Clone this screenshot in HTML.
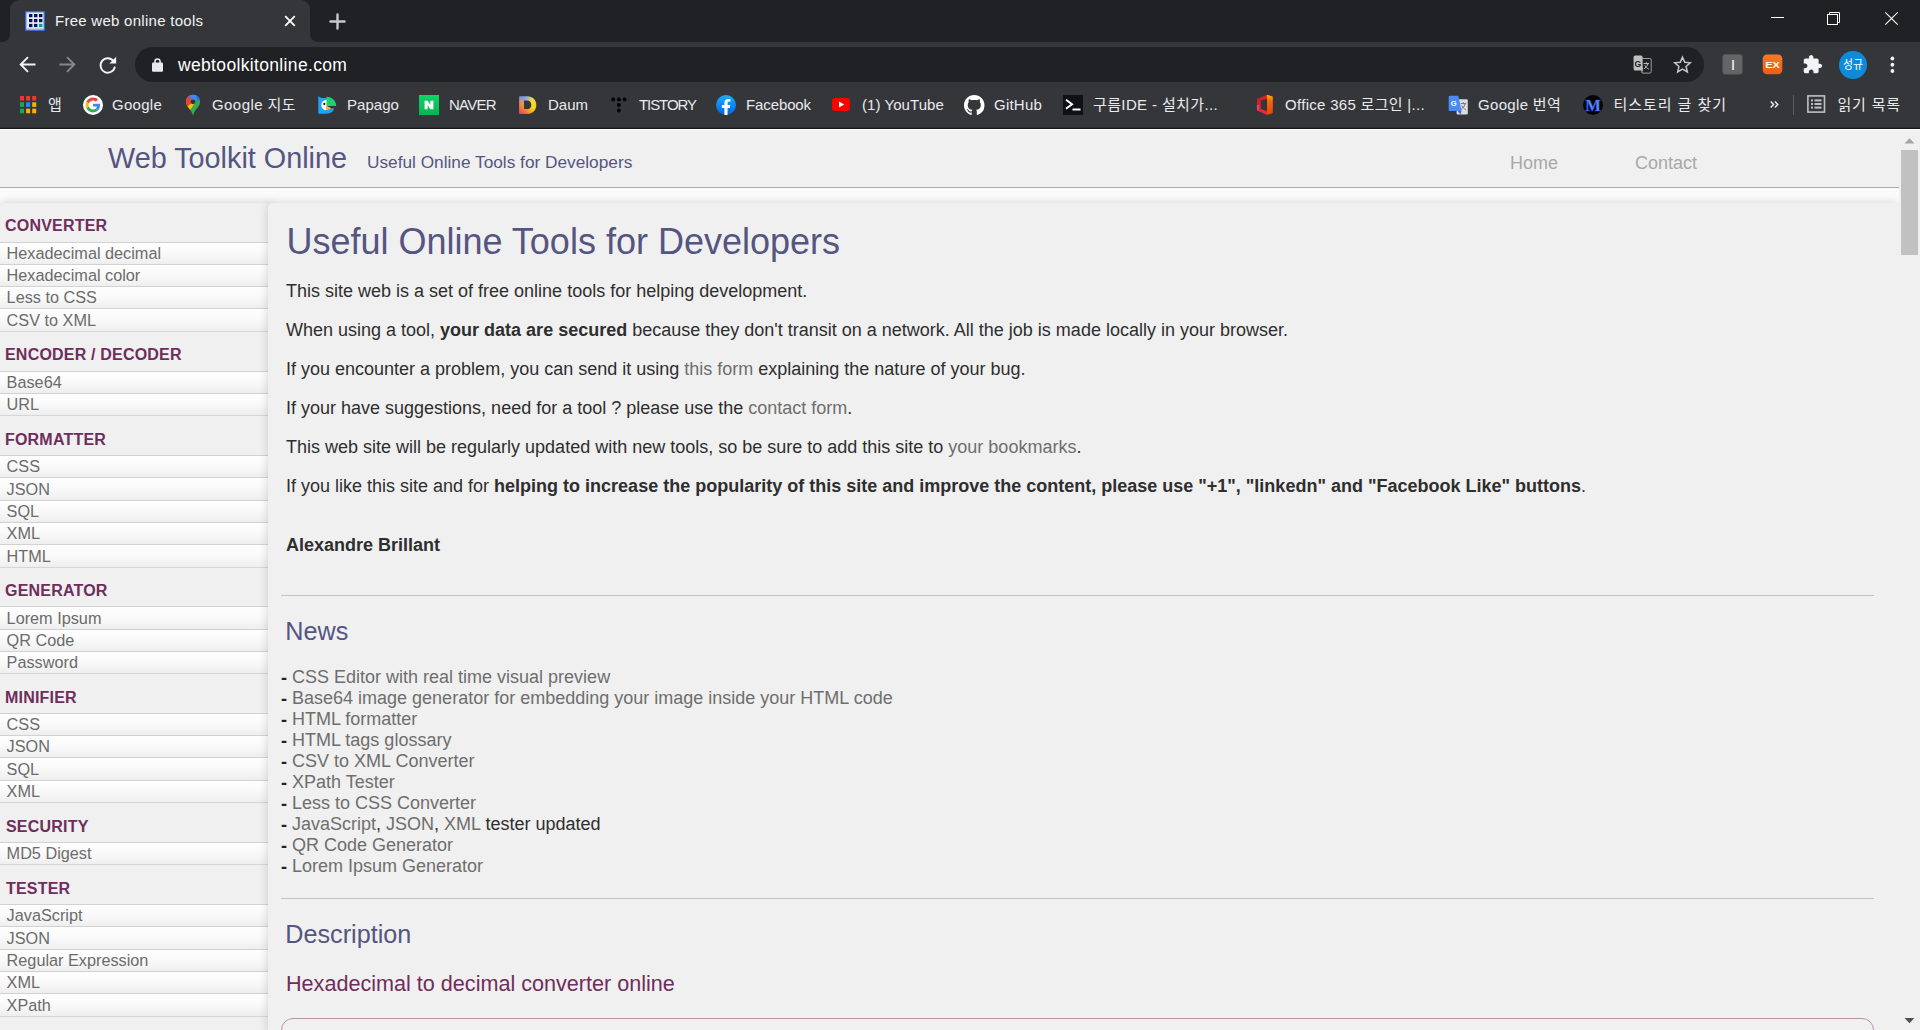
<!DOCTYPE html>
<html lang="en">
<head>
<meta charset="utf-8">
<title>Free web online tools</title>
<style>
*{box-sizing:border-box}
html,body{margin:0;padding:0;width:1920px;height:1030px;overflow:hidden;background:#f0f0f0}
body{position:relative;font-family:"Liberation Sans","Noto Sans CJK KR",sans-serif}
/* ---------- browser chrome ---------- */
#chrome{position:absolute;left:0;top:0;width:1920px;height:130px;background:#35363a;color:#e8eaed;overflow:hidden;z-index:10}
#tabstrip{position:absolute;left:0;top:0;width:1920px;height:42px;background:#202124}
#tab{position:absolute;left:10px;top:0;width:300px;height:42px;background:#35363a;border-radius:9px 9px 0 0}
#tab:before,#tab:after{content:"";position:absolute;bottom:0;width:8px;height:8px}
#tab:before{left:-8px;background:radial-gradient(circle at 0 0,#202124 7.5px,#35363a 8.5px)}
#tab:after{right:-8px;background:radial-gradient(circle at 100% 0,#202124 7.5px,#35363a 8.5px)}
.ct{position:absolute;white-space:nowrap;color:#e8eaed;line-height:20px}
#tabtitle{left:55px;top:11px;font-size:15px;letter-spacing:.27px;color:#f1f3f4}
#omni{position:absolute;left:135px;top:47px;width:1569px;height:35px;border-radius:17.5px;background:#202124}
#url{left:178px;top:54px;font-size:17.5px;letter-spacing:.34px;color:#fff;line-height:22px}
.bm{font-size:15px;top:94px;line-height:22px;color:#e8eaed}
#chromeline{position:absolute;left:0;top:127px;width:1920px;height:2px;background:linear-gradient(#2b2c2f 0,#2b2c2f 50%,#161618 50%,#161618 100%)}
svg{position:absolute;overflow:visible}
/* ---------- page ---------- */
#page{position:absolute;left:0;top:130px;width:1899px;height:900px;background:#fbfbfb;overflow:hidden;color:#222;font-size:18px}

#chromeline2{position:absolute;left:0;top:129px;width:1920px;height:1px;background:#fff}
#hdr{position:absolute;left:0;top:0;width:1899px;height:58px;background:#f0f0f0;border-bottom:1px solid #aaa}
#hdr .t{position:absolute;white-space:nowrap;color:#555582}
#logo{left:108px;top:12px;font-size:28.8px;line-height:33px}
#sub{left:367px;top:22px;font-size:17.25px;line-height:20px}
#hdr .n{position:absolute;white-space:nowrap;color:#a8a8a8;font-size:18px;line-height:21px;top:23px}
#side{position:absolute;left:0;top:73px;width:272px;height:830px;background:#f0f0f0;border-radius:5px 0 0 0;box-shadow:0 0 10px rgba(0,0,0,.19)}
#side h4{position:absolute;left:5px;margin:0;letter-spacing:.2px;font-size:16px;line-height:19px;font-weight:700;color:#6f2d5c;white-space:nowrap}
#side ul{position:absolute;left:0;width:268px;list-style:none;margin:0;padding:0;border-bottom:1px solid #d6d6d6}
#side li{width:268px;border-top:1px solid #d2d2d2;padding:0 0 0 6.6px;font-size:16.25px;line-height:21px;color:#6b6b6b;white-space:nowrap;background:linear-gradient(#fefefe 0,#fbfbfb 35%,#f5f5f5 70%,#eee 100%)}
#main{position:absolute;left:268px;top:73px;width:1631px;height:830px;background:#f0f0f0;border-radius:5px 5px 0 0;box-shadow:0 0 10px rgba(0,0,0,.17)}
#main h1{position:absolute;margin:0;left:18.4px;top:18px;font-size:36px;line-height:42px;font-weight:400;color:#555582;white-space:nowrap}
#main p{position:absolute;margin:0;left:18px;font-size:18px;line-height:21px;white-space:nowrap;color:#2e2e2e}
#main a{color:#6e6e6e;text-decoration:none}
#main hr{position:absolute;margin:0;border:0;left:13px;width:1593px;height:1px;background:#c4c4c4}
#main h2{position:absolute;margin:0;left:17.3px;font-size:25.2px;line-height:29px;font-weight:400;color:#555582;white-space:nowrap}
#main h3{position:absolute;margin:0;left:18px;font-size:21.6px;line-height:25px;font-weight:400;color:#6f2d5c;white-space:nowrap}
#news{position:absolute;left:13px;top:464px;font-size:18px;line-height:21px;color:#2e2e2e;white-space:nowrap}
#news div{height:21px}
#news i{font-style:normal;font-weight:700;position:relative;top:1px;color:#222}
#box{position:absolute;left:13px;top:815px;width:1593px;height:40px;border:1px solid #b793ab;border-radius:12px}
#sb{position:absolute;left:1899px;top:130px;width:21px;height:900px;background:#f0f0f0}
#sb i{position:absolute;left:2px;top:20px;width:17px;height:105px;background:#c1c1c1}
</style>
</head>
<body>
<div id="chrome">
  <div id="tabstrip"></div>
  <div id="tab"></div>
  <div id="tabtitle" class="ct">Free web online tools</div>
  <div id="omni"></div>
  <div id="url" class="ct">webtoolkitonline.com</div>
  <div class="ct bm" style="left:48px;letter-spacing:0.19px">앱</div>
  <div class="ct bm" style="left:112px;letter-spacing:0.27px">Google</div>
  <div class="ct bm" style="left:212px;letter-spacing:0.43px">Google 지도</div>
  <div class="ct bm" style="left:347px;letter-spacing:0.05px">Papago</div>
  <div class="ct bm" style="left:449px;letter-spacing:-0.72px">NAVER</div>
  <div class="ct bm" style="left:548px;letter-spacing:-0.00px">Daum</div>
  <div class="ct bm" style="left:639px;letter-spacing:-1.07px">TISTORY</div>
  <div class="ct bm" style="left:746px;letter-spacing:-0.11px">Facebook</div>
  <div class="ct bm" style="left:862px;letter-spacing:0.07px">(1) YouTube</div>
  <div class="ct bm" style="left:994px;letter-spacing:0.22px">GitHub</div>
  <div class="ct bm" style="left:1093px;letter-spacing:0.37px">구름IDE - 설치가...</div>
  <div class="ct bm" style="left:1285px;letter-spacing:0.30px">Office 365 로그인 |...</div>
  <div class="ct bm" style="left:1478px;letter-spacing:0.32px">Google 번역</div>
  <div class="ct bm" style="left:1613.5px;letter-spacing:0.95px">티스토리 글 찾기</div>
  <div class="ct bm" style="left:1837.5px;letter-spacing:0.82px">읽기 목록</div>
  <!-- favicon -->
  <svg style="left:25px;top:11px" width="20" height="20" viewBox="0 0 20 20"><rect x="0" y="0" width="20" height="20" fill="#3c68cd"/><rect x="1.4" y="1.4" width="17.2" height="17" fill="#e9e9f1"/><rect x="1.6" y="17.4" width="17" height="1.1" fill="#c4beb8"/>
  <g fill="#02105c"><rect x="4" y="3" width="3.4" height="3.2"/><rect x="9" y="3" width="3.4" height="3.2"/><rect x="14" y="3" width="3.4" height="3.2"/><rect x="4" y="8" width="3.4" height="3.2"/><rect x="9" y="8" width="3.4" height="3.2"/><rect x="14" y="8" width="3.4" height="3.2"/><rect x="4" y="12.9" width="3.4" height="3.2"/><rect x="9" y="12.9" width="3.4" height="3.2"/></g><rect x="14" y="12.9" width="3.4" height="3.2" fill="#089c8f"/></svg>
  <!-- tab close -->
  <svg style="left:284px;top:15px" width="12" height="12" viewBox="0 0 12 12"><path d="M1.2 1.2 L10.8 10.8 M10.8 1.2 L1.2 10.8" stroke="#fff" stroke-width="1.8" fill="none"/></svg>
  <!-- new tab -->
  <svg style="left:329px;top:13px" width="17" height="17" viewBox="0 0 17 17"><path d="M8.5 1.5 V15.5 M1.5 8.5 H15.5" stroke="#c6c9ce" stroke-width="2.4" stroke-linecap="round" fill="none"/></svg>
  <!-- window controls -->
  <svg style="left:1771px;top:17px" width="13" height="1" viewBox="0 0 13 1"><rect width="13" height="1" fill="#fff"/></svg>
  <svg style="left:1827px;top:12px" width="14" height="14" viewBox="0 0 14 14"><path d="M2.5 2.5 V0.5 H12.5 V10.5 H10.5" stroke="#fff" stroke-width="1" fill="none"/><rect x="0.5" y="2.5" width="10" height="10" stroke="#fff" stroke-width="1" fill="none"/></svg>
  <svg style="left:1885px;top:12px" width="13" height="13" viewBox="0 0 13 13"><path d="M0.3 0.3 L12.7 12.7 M12.7 0.3 L0.3 12.7" stroke="#fff" stroke-width="1.1" fill="none"/></svg>
  <!-- back -->
  <svg style="left:19px;top:56px" width="17" height="17" viewBox="0 0 17 17"><path d="M16.5 8.5 H2 M9 1.2 L1.7 8.5 L9 15.8" stroke="#f1f3f4" stroke-width="1.9" fill="none"/></svg>
  <!-- forward -->
  <svg style="left:59px;top:56px" width="17" height="17" viewBox="0 0 17 17"><path d="M0.5 8.5 H15 M8 1.2 L15.3 8.5 L8 15.8" stroke="#85878b" stroke-width="1.9" fill="none"/></svg>
  <!-- reload -->
  <svg style="left:99px;top:56px" width="18" height="18" viewBox="0 0 18 18"><path d="M14.6 5.2 A7.2 7.2 0 1 0 15.9 10.6" stroke="#f1f3f4" stroke-width="1.9" fill="none"/><path d="M17.2 0.8 V7.6 H10.4 Z" fill="#f1f3f4"/></svg>
  <!-- lock -->
  <svg style="left:152px;top:58px" width="11" height="14" viewBox="0 0 11 14"><rect x="0" y="4.6" width="11" height="9.2" rx="1.2" fill="#e8eaed"/><path d="M2.9 5 V3.6 A2.6 2.6 0 0 1 8.1 3.6 V5" stroke="#e8eaed" stroke-width="1.5" fill="none"/></svg>
  <!-- translate (omnibox) -->
  <svg style="left:1633px;top:55px" width="19" height="19" viewBox="0 0 19 19"><rect x="8.5" y="3.5" width="9.7" height="14.6" rx="1.3" fill="none" stroke="#9a9c9f" stroke-width="1"/><rect x="0.6" y="0.6" width="9" height="15" rx="1.6" fill="#bfc0c2"/><path d="M6.9 10.5 L10 18 L9.2 10 Z" fill="#bfc0c2"/><text x="1.6" y="11.6" font-family="Liberation Sans,sans-serif" font-weight="700" font-size="8.6" fill="#202124">G</text><path d="M10.6 8.6 H16 M13.3 7.3 V8.6 M15 8.6 C14.3 11 12.6 12.8 10.8 13.9 M11.8 10.4 C12.6 12 14.2 13.4 15.8 14.2" stroke="#c4c5c7" stroke-width="1" fill="none"/></svg>
  <!-- star -->
  <svg style="left:1673px;top:55px" width="19" height="19" viewBox="0 0 19 19"><path d="M9.5 2.2 L11.75 7.3 L17.3 7.85 L13.1 11.55 L14.35 17 L9.5 14.1 L4.65 17 L5.9 11.55 L1.7 7.85 L7.25 7.3 Z" fill="none" stroke="#c4c6c9" stroke-width="1.5" stroke-linejoin="miter"/></svg>
  <!-- ext I -->
  <svg style="left:1722px;top:54px" width="21" height="21" viewBox="0 0 21 21"><rect x="0.7" y="0.6" width="19.6" height="19.6" rx="2.4" fill="#646567" stroke="#57585b" stroke-width=".6"/><text x="10.95" y="15.5" text-anchor="middle" font-family="Liberation Sans,sans-serif" font-size="14.6" fill="#fff">I</text></svg>
  <!-- ext EX -->
  <svg style="left:1762px;top:54px" width="21" height="21" viewBox="0 0 21 21"><defs><linearGradient id="gex" x1="0" y1="0" x2="0" y2="1"><stop offset="0" stop-color="#f57a24"/><stop offset="1" stop-color="#e95f14"/></linearGradient></defs><rect x="0.7" y="0.6" width="19.6" height="19.6" rx="4.2" fill="url(#gex)"/><text x="10.5" y="13.7" text-anchor="middle" font-family="Liberation Sans,sans-serif" font-weight="700" font-size="8.4" textLength="14.6" lengthAdjust="spacingAndGlyphs" fill="#fff">EX</text></svg>
  <!-- puzzle -->
  <svg style="left:1802px;top:54px" width="21" height="21" viewBox="0 0 24 24"><path fill="#f1f3f4" d="M20.5 11H19V7c0-1.1-.9-2-2-2h-4V3.5C13 2.120 11.880 1 10.5 1S8 2.120 8 3.5V5H4c-1.1 0-1.990.9-1.990 2v3.800H3.500c1.490 0 2.700 1.210 2.700 2.700s-1.210 2.700-2.700 2.700H2V20c0 1.100.9 2 2 2h3.800v-1.500c0-1.490 1.210-2.700 2.700-2.700 1.490 0 2.700 1.210 2.700 2.700V22H17c1.100 0 2-.9 2-2v-4h1.500c1.380 0 2.500-1.120 2.500-2.500S21.880 11 20.500 11z"/></svg>
  <!-- avatar -->
  <svg style="left:1839px;top:51px" width="28" height="28" viewBox="0 0 28 28"><circle cx="14" cy="14" r="14" fill="#0d8bdb"/><text x="14" y="18.4" text-anchor="middle" font-family="Noto Sans CJK KR,NanumGothic,sans-serif" font-size="12" fill="#fff" textLength="20" lengthAdjust="spacingAndGlyphs">성규</text></svg>
  <!-- kebab -->
  <svg style="left:1890px;top:56px" width="5" height="18" viewBox="0 0 5 18"><circle cx="2.4" cy="2.5" r="1.9" fill="#f1f3f4"/><circle cx="2.4" cy="8.75" r="1.9" fill="#f1f3f4"/><circle cx="2.4" cy="15" r="1.9" fill="#f1f3f4"/></svg>
  <!-- apps -->
  <svg style="left:20px;top:96px" width="17" height="18" viewBox="0 0 17 18"><g><rect x="0" y="0" width="4" height="4.6" fill="#f0362c"/><rect x="6.1" y="0" width="4" height="4.6" fill="#f0362c"/><rect x="12.2" y="0" width="4" height="4.6" fill="#f0362c"/><rect x="0" y="6.3" width="4" height="4.6" fill="#21a452"/><rect x="6.1" y="6.3" width="4" height="4.6" fill="#1e8efa"/><rect x="12.2" y="6.3" width="4" height="4.6" fill="#fcb200"/><rect x="0" y="12.7" width="4" height="4.6" fill="#21a452"/><rect x="6.1" y="12.7" width="4" height="4.6" fill="#fcb200"/><rect x="12.2" y="12.7" width="4" height="4.6" fill="#fcb200"/></g></svg>
  <!-- google G -->
  <svg style="left:83px;top:95px" width="20" height="20" viewBox="0 0 20 20"><circle cx="10" cy="10" r="10" fill="#fff"/><g transform="translate(2.6 2.6) scale(0.308)"><path fill="#EA4335" d="M24 9.5c3.540 0 6.710 1.220 9.210 3.600l6.850-6.850C35.900 2.380 30.470 0 24 0 14.620 0 6.510 5.380 2.560 13.220l7.980 6.190C12.430 13.720 17.740 9.500 24 9.500z"/><path fill="#4285F4" d="M46.980 24.550c0-1.570-.15-3.090-.38-4.550H24v9.020h12.940c-.58 2.960-2.260 5.480-4.780 7.180l7.730 6c4.510-4.180 7.090-10.360 7.090-17.650z"/><path fill="#FBBC05" d="M10.530 28.590c-.48-1.450-.76-2.990-.76-4.590s.27-3.140.76-4.590l-7.980-6.190C.92 16.460 0 20.120 0 24c0 3.880.92 7.540 2.560 10.780l7.970-6.190z"/><path fill="#34A853" d="M24 48c6.480 0 11.930-2.130 15.890-5.810l-7.730-6c-2.150 1.450-4.920 2.300-8.160 2.300-6.260 0-11.570-4.220-13.470-9.910l-7.980 6.190C6.510 42.620 14.620 48 24 48z"/></g></svg>
  <!-- maps pin -->
  <svg style="left:185px;top:94px" width="16" height="21" viewBox="0 0 16 21"><defs><clipPath id="pin"><path d="M8 0.8C4.1 0.8 0.9 3.9 0.9 7.8C0.9 10.3 2.2 12.1 3.7 13.9C5.4 15.9 6.9 17.6 7.3 20C7.4 20.4 7.6 20.7 8 20.7C8.4 20.7 8.6 20.4 8.7 20C9.1 17.6 10.6 15.9 12.3 13.9C13.8 12.1 15.1 10.3 15.1 7.8C15.1 3.9 11.9 0.8 8 0.8Z"/></clipPath></defs><g clip-path="url(#pin)"><rect x="0" y="0" width="16" height="21" fill="#34a853"/><path d="M0 0 H16 V4 L8 8 L0 8 Z" fill="#4285f4"/><path d="M0 2 L5 3 L8 8 L2 13 L0 12 Z" fill="#ea4335"/><path d="M2.3 12.5 L8 8 L9.5 9.5 L5 16.5 Z" fill="#fbbc04"/><path d="M11 1 L16 3 V8 L12 5 Z" fill="#1a73e8"/></g><circle cx="8" cy="7.8" r="2.4" fill="#35363a"/></svg>
  <!-- papago -->
  <svg style="left:318px;top:96px" width="20" height="18" viewBox="0 0 20 18"><path d="M0.3 0.2 L3.6 2.1 H8.6 V17.8 H0.3 Z" fill="#1ea3f6"/><path d="M8.4 17.8 C12.6 17.8 15.6 15.6 16 12.6 L13 12.2 L8.4 14.3 Z" fill="#1ea3f6"/><path d="M8.4 0.7 C14 0.7 18.2 4.8 18.2 10 L8.4 10 Z" fill="#1fd26c"/><path d="M8.5 3.8 A5.2 5.2 0 0 0 8.5 14.2 Z" fill="#fff"/><path d="M8.4 9.7 L13.4 12.3 L8.4 14.5 Z" fill="#fbc02d"/><circle cx="6.3" cy="8" r="1.15" fill="#222"/></svg>
  <!-- naver -->
  <svg style="left:419px;top:95px" width="20" height="20" viewBox="0 0 20 20"><defs><linearGradient id="gnv" x1="0" y1="0" x2="0" y2="1"><stop offset="0" stop-color="#0fd466"/><stop offset="1" stop-color="#04b551"/></linearGradient></defs><rect width="20" height="20" fill="url(#gnv)"/><path d="M5.6 5.8 H8.7 L11.4 10 V5.8 H14.4 V14.2 H11.4 L8.6 10 V14.2 H5.6 Z" fill="#fff"/></svg>
  <!-- daum -->
  <svg style="left:519px;top:96px" width="18" height="18" viewBox="0 0 18 18"><defs><linearGradient id="gdm" x1="0" y1="0" x2="1" y2=".35"><stop offset="0" stop-color="#6788f3"/><stop offset=".4" stop-color="#9aa6d8"/><stop offset=".72" stop-color="#f2dc3c"/><stop offset="1" stop-color="#f9d51c"/></linearGradient><linearGradient id="gdm2" x1=".9" y1=".1" x2=".1" y2=".95"><stop offset="0" stop-color="#f7a01e" stop-opacity="0"/><stop offset=".42" stop-color="#f7a01e" stop-opacity="0"/><stop offset=".68" stop-color="#f79324" stop-opacity=".95"/><stop offset="1" stop-color="#f3455f"/></linearGradient><clipPath id="cdm"><path fill-rule="evenodd" clip-rule="evenodd" d="M0.3 0.2 H8.3 C13.8 0.2 17.3 3.8 17.3 8.9 C17.3 14 13.8 17.6 8.3 17.6 H0.3 Z M5 4.6 V13.2 H8 C10.7 13.2 12.3 11.5 12.3 8.9 C12.3 6.3 10.7 4.6 8 4.6 Z"/></clipPath></defs><g clip-path="url(#cdm)"><rect width="18" height="18" fill="url(#gdm)"/><rect width="18" height="18" fill="url(#gdm2)"/></g></svg>
  <!-- tistory -->
  <svg style="left:610px;top:96px" width="18" height="18" viewBox="0 0 18 18"><g fill="#000"><circle cx="3.2" cy="3.4" r="1.9"/><circle cx="8.9" cy="3.4" r="1.9"/><circle cx="14.6" cy="3.4" r="1.9"/><circle cx="8.9" cy="9" r="1.9"/><circle cx="8.9" cy="14.5" r="1.9"/></g></svg>
  <!-- facebook -->
  <svg style="left:716px;top:95px" width="20" height="20" viewBox="0 0 20 20"><defs><linearGradient id="gfb" x1="0" y1="0" x2="0" y2="1"><stop offset="0" stop-color="#19aeff"/><stop offset="1" stop-color="#0863e0"/></linearGradient></defs><circle cx="10" cy="10" r="10" fill="url(#gfb)"/><path d="M13.9 12.9 L14.35 10 H11.55 V8.1 C11.55 7.3 11.95 6.55 13.2 6.55 H14.45 V4.1 C14.45 4.1 13.3 3.9 12.2 3.9 C9.9 3.9 8.4 5.3 8.4 7.8 V10 H5.85 V12.9 H8.4 V19.9 C9.4 20.05 10.5 20.05 11.55 19.9 V12.9 Z" fill="#fff"/></svg>
  <!-- youtube -->
  <svg style="left:832px;top:98px" width="18" height="13" viewBox="0 0 18 13"><rect x="0" y="0" width="18" height="13" rx="3.2" fill="#ff0000"/><path d="M7 3.5 L12.2 6.5 L7 9.5 Z" fill="#fff"/></svg>
  <!-- github -->
  <svg style="left:963.6px;top:94.6px" width="20.5" height="20.5" viewBox="0 0 16 16"><path fill="#fff" d="M8 0C3.580 0 0 3.580 0 8c0 3.540 2.290 6.530 5.470 7.590.4.070.55-.17.550-.38 0-.19-.010-.82-.010-1.490-2.010.37-2.530-.49-2.690-.94-.09-.23-.48-.94-.82-1.130-.28-.15-.68-.52-.010-.53.630-.010 1.080.58 1.230.82.720 1.210 1.870.87 2.330.66.070-.52.280-.87.510-1.070-1.780-.2-3.640-.89-3.640-3.950 0-.87.310-1.590.82-2.150-.08-.2-.36-1.020.08-2.120 0 0 .67-.21 2.200.82.640-.18 1.320-.27 2-.27.680 0 1.360.09 2 .27 1.530-1.040 2.200-.82 2.200-.82.440 1.100.16 1.920.08 2.120.51.560.82 1.270.82 2.150 0 3.070-1.870 3.750-3.650 3.950.29.250.54.730.54 1.480 0 1.070-.010 1.930-.010 2.200 0 .21.150.46.550.38A8.013 8.013 0 0016 8c0-4.420-3.580-8-8-8z"/></svg>
  <!-- goorm terminal -->
  <svg style="left:1063px;top:95px" width="20" height="20" viewBox="0 0 20 20"><rect width="20" height="20" fill="#0e1116"/><path d="M3 4.8 L9 9.3 L3 13.8" stroke="#fff" stroke-width="2" fill="none"/><rect x="9.5" y="13.5" width="8" height="2" fill="#fff"/></svg>
  <!-- office -->
  <svg style="left:1256px;top:94px" width="18" height="22" viewBox="0 0 18 22"><defs><linearGradient id="gof1" x1="0" y1="0" x2="0" y2="1"><stop offset="0" stop-color="#ffb900"/><stop offset=".3" stop-color="#f76a0c"/><stop offset="1" stop-color="#e8400c"/></linearGradient><linearGradient id="gof2" x1="0" y1="0" x2="1" y2="1"><stop offset="0" stop-color="#c8161d"/><stop offset="1" stop-color="#ee3035"/></linearGradient></defs><path d="M11 0.8 L16.8 2.6 V19 L11 21 Z" fill="url(#gof1)"/><path d="M11 0.8 L1 5 V16.5 L4.8 14.8 V6.5 L11 4.8 Z" fill="url(#gof2)"/><path d="M1 16.5 L11 21 V17.3 L4.8 14.8 Z" fill="#e92a36"/><path d="M0.8 11 L1 16.5 L3 15.6 V11 Z" fill="#d959a8" opacity=".7"/></svg>
  <!-- google translate -->
  <svg style="left:1448px;top:95px" width="20" height="20" viewBox="0 0 20 20"><rect x="8.6" y="4.2" width="11.2" height="15.4" rx="1.3" fill="#dadce0"/><path d="M12.6 8.6 H18.2 M15.4 7.3 V8.6 M17.2 8.6 C16.5 11.3 14.9 13.3 12.9 14.5 M13.8 10.6 C14.6 12.4 16.2 13.8 17.8 14.6" stroke="#70757a" stroke-width="1" fill="none"/><path d="M2 0.7 H9.2 C9.9 0.7 10.4 1.1 10.6 1.8 L13.5 16.1 H2 C1.2 16.1 0.7 15.5 0.7 14.8 V2 C0.7 1.3 1.2 0.7 2 0.7 Z" fill="#4a8af4"/><path d="M9.8 16.1 L12.5 19.5 L13.5 16.1 Z" fill="#3367d6"/><text x="2.8" y="11" font-family="Liberation Sans,sans-serif" font-weight="700" font-size="7.6" fill="#fff">G</text></svg>
  <!-- M icon -->
  <svg style="left:1583px;top:95px" width="20" height="20" viewBox="0 0 20 20"><circle cx="10" cy="10" r="10" fill="#030308"/><text x="10" y="15.6" text-anchor="middle" font-family="Liberation Serif,serif" font-weight="700" font-size="16.5" fill="#5d8af2" stroke="#2a50d8" stroke-width=".5">M</text></svg>
  <!-- chevron >> -->
  <svg style="left:1770px;top:101px" width="9" height="7" viewBox="0 0 9 7"><path d="M0.7 0.4 L3.6 3.5 L0.7 6.6 M4.9 0.4 L7.8 3.5 L4.9 6.6" stroke="#e8eaed" stroke-width="1.5" fill="none"/></svg>
  <!-- separator -->
  <svg style="left:1793px;top:95px" width="1" height="20" viewBox="0 0 1 20"><rect width="1" height="20" fill="#5a5c60"/></svg>
  <!-- reading list -->
  <svg style="left:1807px;top:95px" width="19" height="18" viewBox="0 0 19 18"><rect x="0.9" y="0.9" width="16.6" height="16.2" fill="none" stroke="#bdc1c6" stroke-width="1.6"/><g fill="#bdc1c6"><rect x="4" y="4.4" width="2" height="2"/><rect x="4" y="8" width="2" height="2"/><rect x="4" y="11.6" width="2" height="2"/><rect x="7.5" y="4.4" width="7" height="2"/><rect x="7.5" y="8" width="7" height="2"/><rect x="7.5" y="11.6" width="7" height="2"/></g></svg>
  <div id="chromeline"></div><div id="chromeline2"></div>
</div>
<div id="page">

<div id="hdr">
  <div id="logo" class="t">Web Toolkit Online</div>
  <div id="sub" class="t">Useful Online Tools for Developers</div>
  <div class="n" style="left:1510px">Home</div>
  <div class="n" style="left:1635px">Contact</div>
</div>
<div id="side">
  <h4 style="top:13px;left:5px">CONVERTER</h4>
  <ul style="top:39px;height:90px">
    <li style="height:22px">Hexadecimal decimal</li>
    <li style="height:22px">Hexadecimal color</li>
    <li style="height:22px">Less to CSS</li>
    <li style="height:23px;padding-top:1px">CSV to XML</li>
  </ul>
  <h4 style="top:142px;left:5px">ENCODER / DECODER</h4>
  <ul style="top:168px;height:45px">
    <li style="height:22px">Base64</li>
    <li style="height:22px">URL</li>
  </ul>
  <h4 style="top:227px;left:5px">FORMATTER</h4>
  <ul style="top:252px;height:113px">
    <li style="height:22px">CSS</li>
    <li style="height:23px;padding-top:1px">JSON</li>
    <li style="height:22px">SQL</li>
    <li style="height:22px">XML</li>
    <li style="height:23px;padding-top:1px">HTML</li>
  </ul>
  <h4 style="top:378px;left:5px">GENERATOR</h4>
  <ul style="top:403px;height:68px">
    <li style="height:23px;padding-top:1px">Lorem Ipsum</li>
    <li style="height:22px">QR Code</li>
    <li style="height:22px">Password</li>
  </ul>
  <h4 style="top:485px;left:5px">MINIFIER</h4>
  <ul style="top:510px;height:90px">
    <li style="height:22px">CSS</li>
    <li style="height:22px">JSON</li>
    <li style="height:23px;padding-top:1px">SQL</li>
    <li style="height:22px">XML</li>
  </ul>
  <h4 style="top:614px;left:6px">SECURITY</h4>
  <ul style="top:639px;height:23px">
    <li style="height:22px">MD5 Digest</li>
  </ul>
  <h4 style="top:676px;left:6px">TESTER</h4>
  <ul style="top:701px;height:113px">
    <li style="height:22px">JavaScript</li>
    <li style="height:23px;padding-top:1px">JSON</li>
    <li style="height:22px">Regular Expression</li>
    <li style="height:22px">XML</li>
    <li style="height:23px;padding-top:1px">XPath</li>
  </ul>
</div>
<div id="main">
  <h1>Useful Online Tools for Developers</h1>
  <p style="top:78px">This site web is a set of free online tools for helping development.</p>
  <p style="top:117px">When using a tool, <b>your data are secured</b> because they don't transit on a network. All the job is made locally in your browser.</p>
  <p style="top:156px">If you encounter a problem, you can send it using <a>this form</a> explaining the nature of your bug.</p>
  <p style="top:195px">If your have suggestions, need for a tool ? please use the <a>contact form</a>.</p>
  <p style="top:234px">This web site will be regularly updated with new tools, so be sure to add this site to <a>your bookmarks</a>.</p>
  <p style="top:273px">If you like this site and for <b>helping to increase the popularity of this site and improve the content, please use "+1", "linkedn" and "Facebook Like" buttons</b>.</p>
  <p style="top:332px"><b>Alexandre Brillant</b></p>
  <hr style="top:392px">
  <h2 style="top:414px">News</h2>
  <div id="news">
    <div><i>-</i> <a>CSS Editor with real time visual preview</a></div>
    <div><i>-</i> <a>Base64 image generator for embedding your image inside your HTML code</a></div>
    <div><i>-</i> <a>HTML formatter</a></div>
    <div><i>-</i> <a>HTML tags glossary</a></div>
    <div><i>-</i> <a>CSV to XML Converter</a></div>
    <div><i>-</i> <a>XPath Tester</a></div>
    <div><i>-</i> <a>Less to CSS Converter</a></div>
    <div><i>-</i> <a>JavaScript</a>, <a>JSON</a>, <a>XML</a> tester updated</div>
    <div><i>-</i> <a>QR Code Generator</a></div>
    <div><i>-</i> <a>Lorem Ipsum Generator</a></div>
  </div>
  <hr style="top:695px">
  <h2 style="top:717px">Description</h2>
  <h3 style="top:768px">Hexadecimal to decimal converter online</h3>
  <div id="box"></div>
</div>

</div>
<div id="sb"><i></i>
<svg style="left:5px;top:7.6px" width="11" height="6" viewBox="0 0 11 6"><path d="M5.5 0.3 L10.4 5.6 H0.6 Z" fill="#a3a3a3"/></svg>
<svg style="left:5px;top:888px" width="11" height="6" viewBox="0 0 11 6"><path d="M5.5 5.3 L10.4 0.1 H0.6 Z" fill="#505050"/></svg>
</div>
</body>
</html>
